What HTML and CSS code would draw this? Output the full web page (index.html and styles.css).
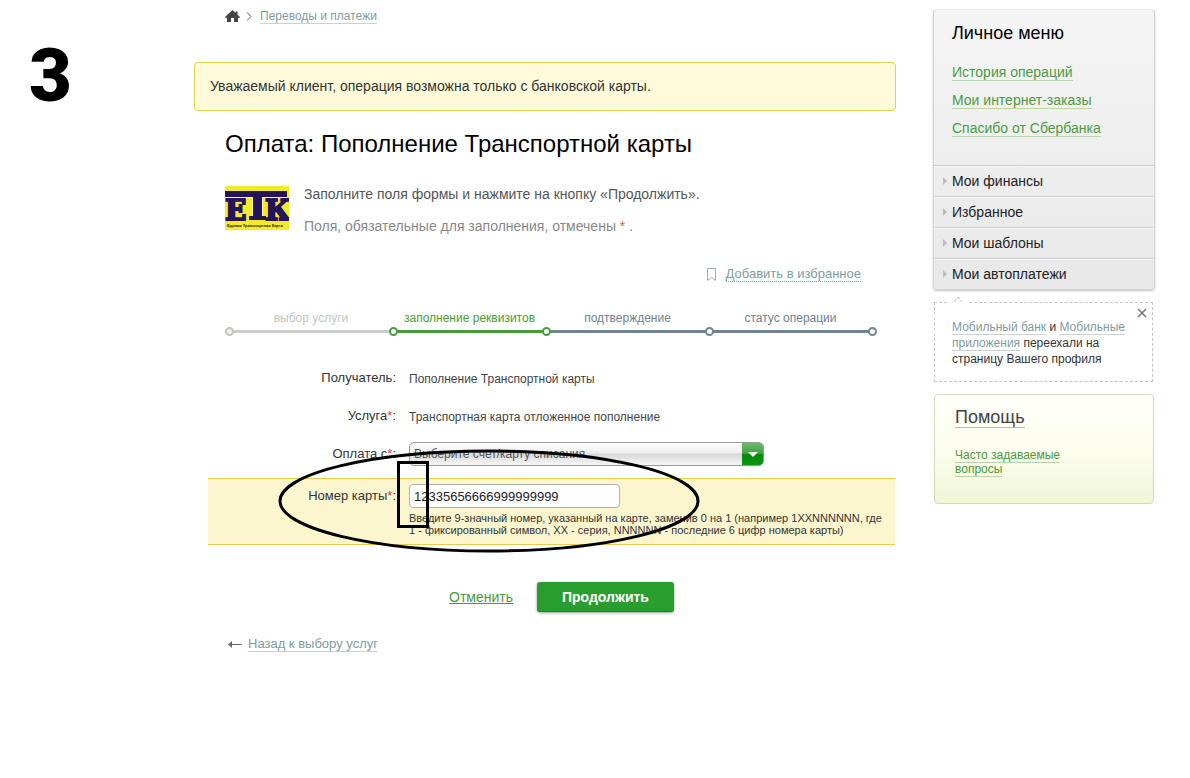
FILE: index.html
```html
<!DOCTYPE html>
<html lang="ru">
<head>
<meta charset="utf-8">
<title>Оплата: Пополнение Транспортной карты</title>
<link rel="stylesheet" href="styles.css">
</head>
<body>
<div class="page">
  <div class="step-number">3</div>

  <main class="main">
    <nav class="crumbs">
      <a class="home" href="#" aria-label="Главная"><svg width="15" height="12" viewBox="0 0 15 12"><path fill="#444" d="M7.500 0 10.500 2.700V1.500h2v3.200L15 7v.8h-2V12H9V8H6v4H2V7.800H0V7z"/></svg></a>
      <svg width="6" height="9" viewBox="0 0 6 9"><path fill="none" stroke="#555" d="M1 .5l4 4-4 4"/></svg>
      <a class="soft-link" href="#">Переводы и платежи</a>
    </nav>

    <p class="notice">Уважаемый клиент, операция возможна только с банковской карты.</p>

    <h1 class="title">Оплата: Пополнение Транспортной карты</h1>

    <div class="intro">
      <svg class="logo" width="64" height="44" viewBox="0 0 64 44" role="img" aria-label="ЕТК">
        <path fill="#f6e92c" d="M0 0h64v44H0z"/>
        <path fill="#241458" d="M0 5h62v6H37v19h4v4H24v-4h4V11H0z"/>
        <path fill="none" stroke="#fff6a0" d="M0 11.500h27.500V30M37.500 30V11.500H62"/>
        <text class="logo-letter" x="0" y="34" font-size="28">Е</text>
        <text class="logo-letter" x="40" y="34" font-size="28">К</text>
        <text class="logo-caption" x="2" y="41" font-size="4">Единая Транспортная Карта</text>
      </svg>
      <div>
        <p class="intro-main">Заполните поля формы и нажмите на кнопку «Продолжить».</p>
        <p class="intro-note">Поля, обязательные для заполнения, отмечены <span class="star">*</span> .</p>
      </div>
    </div>

    <div class="favorite">
      <svg width="10" height="13" viewBox="0 0 10 13"><path fill="none" stroke="#9fb0b0" d="M.5.500h8v12l-4-3-4 3z"/></svg>
      <a class="dotted-link" href="#">Добавить в избранное</a>
    </div>

    <ol class="steps">
      <li class="step done">выбор услуги</li>
      <li class="step current">заполнение реквизитов</li>
      <li class="step">подтверждение</li>
      <li class="step last">статус операции</li>
    </ol>

    <form class="form">
      <div class="row"><span class="label">Получатель:</span><span class="value">Пополнение Транспортной карты</span></div>
      <div class="row"><span class="label">Услуга<span class="red">*</span>:</span><span class="value">Транспортная карта отложенное пополнение</span></div>
      <div class="row">
        <label class="label" for="account">Оплата с<span class="red">*</span>:</label>
        <div class="select">
          <select id="account"><option>Выберите счет/карту списания</option></select>
          <span class="select-arrow"><svg width="10" height="5" viewBox="0 0 10 5"><path fill="#fff" d="M0 0h10L5 5z"/></svg></span>
        </div>
      </div>
      <div class="row active">
        <label class="label" for="card">Номер карты<span class="red">*</span>:</label>
        <div class="field">
          <input class="input" id="card" type="text" value="12335656666999999999">
          <p class="hint">Введите 9-значный номер, указанный на карте, заменив 0 на 1 (например 1XXNNNNNN, где<br>1 - фиксированный символ, XX - серия, NNNNNN - последние 6 цифр номера карты)</p>
        </div>
        <svg class="oval" viewBox="0 0 422 104" aria-hidden="true"><ellipse cx="211" cy="52" rx="209" ry="50" fill="none" stroke="#000" stroke-width="3"/></svg>
        <span class="frame"></span>
      </div>
      <div class="actions">
        <a class="cancel" href="#">Отменить</a>
        <button class="submit" type="button">Продолжить</button>
      </div>
    </form>

    <div class="back">
      <svg width="14" height="8" viewBox="0 0 14 8"><path stroke="#666" d="M3 4.500h11"/><path fill="#666" d="M0 4.500 4 1v7z"/></svg>
      <a class="soft-link" href="#">Назад к выбору услуг</a>
    </div>
  </main>

  <aside class="side">
    <section class="menu">
      <h2 class="menu-title">Личное меню</h2>
      <ul class="menu-links">
        <li><a href="#">История операций</a></li>
        <li><a href="#">Мои интернет-заказы</a></li>
        <li><a href="#">Спасибо от Сбербанка</a></li>
      </ul>
      <ul class="menu-groups">
        <li><button class="group" type="button">Мои финансы</button></li>
        <li><button class="group" type="button">Избранное</button></li>
        <li><button class="group" type="button">Мои шаблоны</button></li>
        <li><button class="group" type="button">Мои автоплатежи</button></li>
      </ul>
    </section>

    <section class="tip">
      <svg class="tip-nose" width="18" height="8" viewBox="0 0 18 8"><path fill="#fff" d="M0 6h18v2H0z"/><path fill="none" stroke="#bbb" stroke-dasharray="4 1" d="M5 6l4-5 4 5"/></svg>
      <button class="close" type="button" aria-label="Закрыть"><svg width="10" height="10" viewBox="0 0 10 10"><path stroke="#777" stroke-width="1.500" d="M1 1l8 8M9 1L1 9"/></svg></button>
      <p><a class="soft-link" href="#">Мобильный банк</a> и <a class="soft-link" href="#">Мобильные приложения</a> переехали на страницу Вашего профиля</p>
    </section>

    <section class="help">
      <h2 class="help-title"><a href="#">Помощь</a></h2>
      <a class="help-link" href="#">Часто задаваемые<br>вопросы</a>
    </section>
  </aside>
</div>
</body>
</html>
```
FILE: styles.css
```css
*, *::before, *::after { box-sizing: border-box; }
body {
  margin: 0;
  background: #fff;
  color: #333;
  font-family: "Liberation Sans", Arial, sans-serif;
  font-size: 13px;
  line-height: 16px;
}
h1, h2, p, ul, ol { margin: 0; padding: 0; font-weight: normal; }
ul, ol { list-style: none; }
button, input, select { font-family: inherit; }

.page {
  display: grid;
  grid-template-columns: 194px minmax(0, 1fr) 222px;
  padding-right: 35px;
}
.step-number {
  padding: 39px 0 0 29px;
  color: #000;
  font: 900 74px/74px "Roboto", "Liberation Sans", sans-serif;
}
.main { padding-top: 9px; margin-right: 37px; }

.soft-link {
  color: #7f9c9e;
  text-decoration: underline 1px #c3d5d6;
  text-underline-offset: 3px;
  text-decoration-skip-ink: none;
}
.crumbs {
  display: flex;
  align-items: center;
  gap: 6px;
  margin-left: 31px;
  font-size: 12px;
  line-height: 14px;
}
.crumbs .soft-link { margin-left: 2px; }
.home { display: flex; }

.notice {
  margin-top: 39px;
  padding: 15px 15px 16px;
  border: 1px solid #e5cf4a;
  border-radius: 4px;
  background: #fefbdb;
  font-size: 14px;
}
.title {
  margin: 19px 0 0 31px;
  color: #000;
  font-size: 24px;
  line-height: 28px;
}
.intro {
  display: flex;
  gap: 15px;
  margin: 28px 0 0 31px;
  font-size: 14px;
}
.logo { flex: none; }
.logo-letter { fill: #241458; font-family: "DejaVu Serif", serif; font-weight: bold; stroke: #241458; stroke-width: 2px; }
.logo-caption { fill: #222; font-family: "Liberation Sans", sans-serif; font-weight: bold; }
.intro-main { color: #555; }
.intro-note { margin-top: 16px; color: #888; }
.star { color: #d9663c; }
.red { color: #e8323c; }

.favorite {
  display: flex;
  justify-content: flex-end;
  align-items: center;
  gap: 9px;
  margin: 32px 35px 0 0;
}
.dotted-link {
  color: #7f9c9e;
  text-decoration: none;
  border-bottom: 1px dotted #7f9c9e;
  line-height: 15px;
}

.steps {
  display: grid;
  grid-template-columns: 164fr 153fr 163fr 163fr;
  margin: 28px 24px 0 35px;
  font-size: 12px;
  text-align: center;
}
.step {
  position: relative;
  padding-bottom: 4px;
  border-bottom: 3px solid #6f8594;
  color: #6f7f8c;
}
.step::before, .last::after {
  content: "";
  position: absolute;
  bottom: -6px;
  left: -4px;
  width: 9px;
  height: 9px;
  border: 2px solid #6f8594;
  border-radius: 50%;
  background: #fff;
}
.last::after { left: auto; right: -5px; }
.done { border-color: #ccc; color: #c4c4c4; }
.done::before { border-color: #c4c4c0; background: #f2f2f2; }
.current { border-color: #4a9a3c; color: #4a9a3c; }
.current::before { border-color: #4a9a3c; }
.current + .step::before { border-color: #4a9a3c; }

.form { margin: 26px 1px 0 14px; }
.row {
  display: grid;
  grid-template-columns: 188px minmax(0, 1fr);
  column-gap: 13px;
  align-items: center;
  min-height: 38px;
}
.label { text-align: right; }
.value { padding-top: 2px; font-size: 12px; color: #444; }
.select {
  display: flex;
  width: 355px;
  height: 24px;
  border: 1px solid #999;
  border-radius: 5px;
  background: linear-gradient(#fff 0, #eee 45%, #d8d8d8 50%, #f6f6f6 100%);
  overflow: hidden;
}
.select select {
  flex: 1;
  appearance: none;
  border: 0;
  padding: 0 4px;
  background: transparent;
  color: #555;
  font-size: 12px;
}
.select-arrow {
  display: flex;
  align-items: center;
  justify-content: center;
  width: 21px;
  background: linear-gradient(#6bb86b 0, #3fa33f 48%, #068a0c 52%, #0a960f 100%);
}
.active {
  position: relative;
  align-items: start;
  margin-top: 5px;
  padding: 5px 0 8px;
  border-top: 1px solid #eac84a;
  border-bottom: 1px solid #eac84a;
  background: #fcf6cf;
}
.active .label { padding-top: 4px; }
.input {
  display: block;
  width: 211px;
  height: 24px;
  padding: 0 4px;
  border: 1px solid #a9b4b6;
  border-radius: 4px;
  background: #fff;
  color: #222;
  font-size: 13px;
}
.hint { margin-top: 4px; font-size: 11px; line-height: 12px; }
.oval { position: absolute; left: 70px; top: -30px; width: 422px; height: 104px; }
.frame { position: absolute; left: 189px; top: -18px; width: 32px; height: 67px; border: 3px solid #000; }

.actions {
  display: flex;
  align-items: center;
  gap: 24px;
  margin: 37px 0 0 241px;
}
.cancel { color: #4a9a3c; font-size: 14px; }
.submit {
  width: 137px;
  height: 30px;
  border: 0;
  border-bottom: 1px solid #1d7d24;
  border-radius: 3px;
  background: #2a9d31;
  box-shadow: 0 1px 3px rgba(0, 0, 0, .4);
  color: #fff;
  font-size: 14px;
  font-weight: bold;
}
.back {
  display: flex;
  align-items: center;
  gap: 6px;
  margin: 24px 0 0 34px;
}

.side { padding-top: 9px; }
.menu {
  border: 1px solid #d4d4d4;
  border-top-color: #eee;
  border-radius: 4px;
  background: linear-gradient(#f5f5f5, #e8e8e8);
  box-shadow: 0 1px 2px rgba(0, 0, 0, .25);
}
.menu-title { padding: 13px 18px 0; color: #000; font-size: 18px; line-height: 20px; }
.menu-links { padding: 15px 18px 23px; font-size: 14px; line-height: 28px; }
.menu-links a { color: #4d9a46; text-decoration: none; border-bottom: 1px solid #b5d8a8; }
.group {
  display: flex;
  align-items: center;
  gap: 5px;
  width: 100%;
  height: 31px;
  padding: 0 9px;
  border: 0;
  border-top: 1px solid #ccc;
  background: transparent;
  box-shadow: inset 0 1px #f8f8f8;
  color: #222;
  font-size: 14px;
}
.group::before {
  content: "";
  border: 4px solid transparent;
  border-left-color: #bbb;
  border-right: 0;
}
.tip {
  position: relative;
  margin: 12px 2px 0 1px;
  padding: 16px 17px 14px;
  border: 1px dashed #c4c4c4;
  font-size: 12px;
}
.tip-nose { position: absolute; left: 14px; top: -7px; }
.close {
  position: absolute;
  right: 5px;
  top: 5px;
  display: flex;
  padding: 0;
  border: 0;
  background: none;
}
.help {
  margin: 12px 1px 0;
  padding: 10px 20px 27px;
  border: 1px solid #d3d9b8;
  border-radius: 4px;
  background: linear-gradient(#fffffa, #fdfeee 50%, #eff5d5);
  font-size: 12px;
  line-height: 14px;
}
.help-title { margin-bottom: 19px; font-size: 18px; line-height: 24px; }
.help-title a { color: #444; text-decoration: none; border-bottom: 1px solid #bbb; }
.help-link { color: #4a9a3c; text-decoration: none; border-bottom: 1px solid #b5d8a8; }
```
